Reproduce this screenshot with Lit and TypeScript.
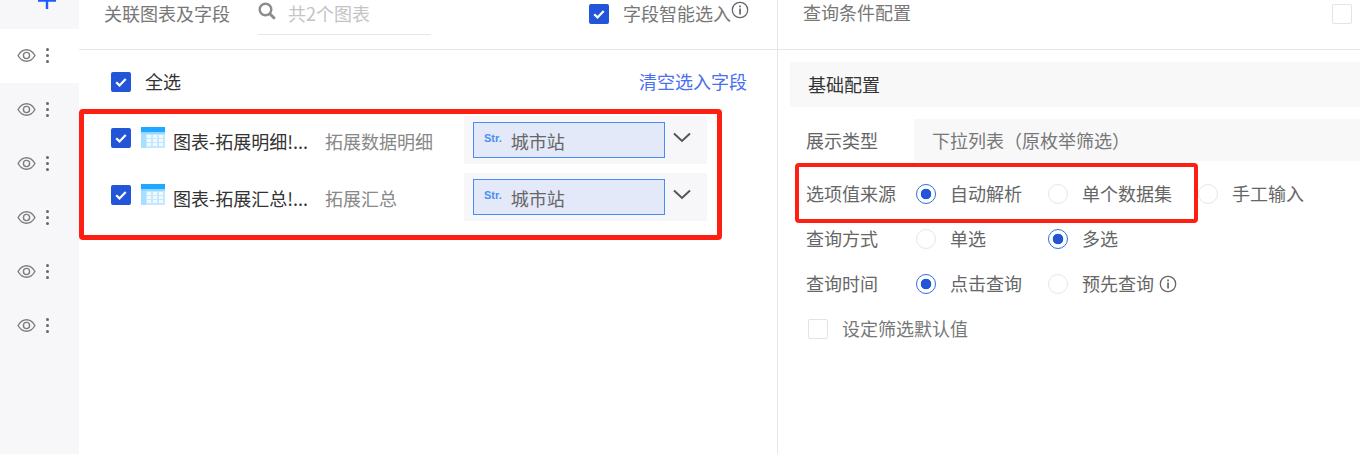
import { css, html, LitElement, svg } from 'lit';
import { customElement } from 'lit/decorators.js';

const check = svg`<svg class="tick" viewBox="0 0 20 20" width="20" height="20"><path d="M5.2 10.2l3.3 3.2 6.2-6.4" fill="none" stroke="#fff" stroke-width="2.2"/></svg>`;

const eye = svg`<svg viewBox="0 0 20 16" width="19" height="15"><path d="M1 8c2.300-4 5.300-6.200 9-6.200S16.700 4 19 8c-2.300 4-5.300 6.200-9 6.200S3.300 12 1 8z" fill="none" stroke="#7d7d7d" stroke-width="1.500"/><circle cx="10" cy="8" r="3.300" fill="none" stroke="#7d7d7d" stroke-width="1.500"/></svg>`;

const info = svg`<svg viewBox="0 0 18 18" width="18" height="18"><circle cx="9" cy="9" r="7.700" fill="none" stroke="#666" stroke-width="1.300"/><rect x="8.200" y="7.500" width="1.700" height="6" fill="#666"/><rect x="8.200" y="4.500" width="1.700" height="1.800" fill="#666"/></svg>`;

const tableIcon = svg`<svg viewBox="0 0 24 21" width="24" height="21"><rect width="24" height="21" fill="#c4e9ff"/><rect y="5" width="5" height="16" fill="#a8deff"/><rect y="5" width="24" height="2" fill="#93d6ff"/><rect width="24" height="5" fill="#1fa8ff"/><g fill="#f1faff"><rect x="6" y="8" width="4" height="3"/><rect x="12" y="8" width="4" height="3"/><rect x="18" y="8" width="4" height="3"/><rect x="6" y="12" width="4" height="3"/><rect x="12" y="12" width="4" height="3"/><rect x="18" y="12" width="4" height="3"/><rect x="6" y="16" width="4" height="3"/><rect x="12" y="16" width="4" height="3"/><rect x="18" y="16" width="4" height="3"/></g></svg>`;

const chartRows = [
  { name: '图表-拓展明细!...', set: '拓展数据明细' },
  { name: '图表-拓展汇总!...', set: '拓展汇总' },
];

const radioRows = [
  { label: '选项值来源', options: [['自动解析', true], ['单个数据集', false], ['手工输入', false]] },
  { label: '查询方式', options: [['单选', false], ['多选', true]] },
  { label: '查询时间', options: [['点击查询', true], ['预先查询', false]], hint: true },
];

@customElement('app-root')
export class App extends LitElement {
  static styles = css`
    :host {
      background: #fff;
      color: #333;
      display: block;
      font-family: 'Noto Sans CJK SC', 'Liberation Sans', sans-serif;
      font-size: 18px;
      height: 454px;
      line-height: 24px;
      overflow: hidden;
      position: relative;
      width: 1360px;
    }

    .page {
      display: flex;
      height: 100%;
    }

    .rail {
      background: #f7f7fa;
      flex: 0 0 79px;
    }

    .rail-top {
      height: 29px;
      overflow: hidden;
    }

    .rail-top svg {
      display: block;
      margin: -1px 0 0 38px;
    }

    .rail-row {
      align-items: center;
      box-sizing: border-box;
      display: flex;
      gap: 10px;
      height: 54px;
      padding: 0 0 2px 17px;
    }

    .rail-row.active {
      background: #fff;
    }

    .dots {
      display: flex;
      flex-direction: column;
      gap: 3px;
    }

    .dots i {
      background: #666;
      border-radius: 50%;
      height: 3px;
      width: 3px;
    }

    .left {
      border-right: 1px solid #e6e6e6;
      flex: 0 0 698px;
    }

    .right {
      flex: 1;
      min-width: 0;
    }

    .head {
      align-items: flex-start;
      border-bottom: 1px solid #e6e6e6;
      box-sizing: border-box;
      color: #777;
      display: flex;
      height: 50px;
      padding-top: 1px;
    }

    .left .head {
      padding-left: 25px;
    }

    .right .head {
      justify-content: space-between;
      padding: 0 8px 0 25px;
    }

    .search {
      align-items: flex-start;
      border-bottom: 1px solid #e6e6e6;
      box-sizing: border-box;
      color: #c4c4c4;
      display: flex;
      gap: 12px;
      height: 34px;
      margin-left: 28px;
      width: 173px;
    }

    .search svg {
      flex: none;
      margin-top: 1px;
    }

    .smart {
      align-items: flex-start;
      display: flex;
      margin-left: auto;
      padding-right: 28px;
    }

    .smart .box {
      margin: 3px 14px 0 0;
    }

    .box {
      border-radius: 2px;
      box-sizing: border-box;
      flex: none;
      height: 20px;
      width: 20px;
    }

    .right .head .box {
      margin-top: 4px;
    }

    .box.on {
      background: #2255d8;
    }

    .box.off {
      background: #fff;
      border: 1px solid #e3e3e3;
    }

    .tick {
      display: block;
    }

    .all {
      align-items: flex-start;
      display: flex;
      gap: 14px;
      line-height: 22px;
      padding: 20px 30px 0 32px;
    }

    .all .box {
      margin-top: 2px;
    }

    .all a {
      color: #4a6ff0;
      margin-left: auto;
    }

    .list {
      display: flex;
      flex-direction: column;
      gap: 9px;
      padding: 24px 0 0 32px;
    }

    .item {
      align-items: flex-start;
      display: flex;
      height: 48px;
    }

    .item .box {
      margin-top: 12px;
    }

    .item .tb {
      line-height: 0;
      margin: 11px 0 0 10px;
    }

    .item .name {
      margin: 13px 0 0 8px;
      white-space: nowrap;
      width: 152px;
    }

    .item .set {
      color: #888;
      margin-top: 13px;
      white-space: nowrap;
      width: 139px;
    }

    .pick {
      align-items: center;
      background: #f7f7fa;
      box-sizing: border-box;
      display: flex;
      height: 48px;
      padding-left: 9px;
      width: 243px;
    }

    .tag {
      align-items: center;
      background: #e3e9f8;
      border: 1px solid #4a8bf5;
      box-sizing: border-box;
      color: #666;
      display: flex;
      height: 36px;
      padding-left: 10px;
      width: 192px;
    }

    .tag b {
      color: #4a8ff5;
      font-family: 'Liberation Sans', sans-serif;
      font-size: 11px;
      line-height: 12px;
      margin: -5px 9px 0 0;
    }

    .tag span {
      padding-top: 2px;
    }

    .pick svg {
      margin: -6px 0 0 8px;
    }

    .section {
      background: #f8f8f9;
      height: 45px;
      line-height: 45px;
      margin: 12px 0 12px 12px;
      padding-left: 18px;
    }

    .field {
      align-items: center;
      color: #666;
      display: flex;
      padding-left: 28px;
    }

    .field .label {
      flex: 0 0 108px;
    }

    .type {
      background: #f8f8f9;
      color: #777;
      flex: 1;
      height: 42px;
      line-height: 43px;
      padding-left: 18px;
    }

    .radios {
      display: flex;
      flex-direction: column;
      gap: 21px;
      margin-top: 21px;
    }

    .radio-row {
      height: 24px;
    }

    .radio-row .label {
      flex: 0 0 110px;
    }

    .radio-row .label,
    .opt .text,
    .default .text {
      line-height: 22px;
      padding-bottom: 2px;
    }

    .opt {
      align-items: center;
      display: flex;
      flex: 0 0 132px;
      gap: 14px;
    }

    .opt.wide {
      flex-basis: 150px;
    }

    .dot {
      background: #fff;
      border: 1px solid #e6e6e6;
      border-radius: 50%;
      box-sizing: border-box;
      flex: none;
      height: 20px;
      position: relative;
      width: 20px;
    }

    .dot.on {
      background: radial-gradient(circle, #2255d8 0 5px, #fff 5.6px);
      border-color: #2f6bea;
    }

    .hint {
      display: block;
      line-height: 0;
      margin-left: -9px;
    }

    .default {
      align-items: center;
      color: #777;
      display: flex;
      gap: 14px;
      margin-top: 21px;
      padding-left: 30px;
    }

    .flag {
      border: 4px solid #ff1f12;
      border-radius: 4px;
      box-sizing: border-box;
      pointer-events: none;
      position: absolute;
    }

    .flag.charts {
      border-width: 5px;
      height: 131px;
      left: 79px;
      top: 109px;
      width: 643px;
    }

    .flag.source {
      height: 60px;
      left: 795px;
      top: 163px;
      width: 403px;
    }
  `;

  renderBox(on: boolean) {
    return html`<span class="box ${on ? 'on' : 'off'}">${on ? check : ''}</span>`;
  }

  render() {
    return html`
      <div class="page">
        <nav class="rail">
          <div class="rail-top">
            <svg viewBox="0 0 18 10" width="18" height="10">
              <path d="M0 1.500h18M9 0v10" fill="none" stroke="#1a5cff" stroke-width="2.400" />
            </svg>
          </div>
          ${[0, 1, 2, 3, 4, 5].map(
            (i) => html`
              <div class="rail-row ${i === 0 ? 'active' : ''}">
                ${eye}
                <span class="dots"><i></i><i></i><i></i></span>
              </div>
            `,
          )}
        </nav>

        <section class="left">
          <header class="head">
            <span>关联图表及字段</span>
            <div class="search">
              <svg viewBox="0 0 18 18" width="18" height="18">
                <circle cx="7.500" cy="7.500" r="5.800" fill="none" stroke="#8c8c8c" stroke-width="2.400" />
                <path d="M11.800 11.800l5 5" stroke="#8c8c8c" stroke-width="2.800" />
              </svg>
              <span>共2个图表</span>
            </div>
            <div class="smart">
              ${this.renderBox(true)}
              <span>字段智能选入</span>
              ${info}
            </div>
          </header>
          <div class="all">
            ${this.renderBox(true)}
            <span>全选</span>
            <a>清空选入字段</a>
          </div>
          <div class="list">
            ${chartRows.map(
              (row) => html`
                <div class="item">
                  ${this.renderBox(true)}
                  <span class="tb">${tableIcon}</span>
                  <span class="name">${row.name}</span>
                  <span class="set">${row.set}</span>
                  <div class="pick">
                    <div class="tag"><b>Str.</b><span>城市站</span></div>
                    <svg viewBox="0 0 18 11" width="18" height="11">
                      <path d="M1 1.500l8 7.500 8-7.500" fill="none" stroke="#555" stroke-width="2" />
                    </svg>
                  </div>
                </div>
              `,
            )}
          </div>
        </section>

        <section class="right">
          <header class="head">
            <span>查询条件配置</span>
            ${this.renderBox(false)}
          </header>
          <div class="section">基础配置</div>
          <div class="field">
            <span class="label">展示类型</span>
            <div class="type">下拉列表（原枚举筛选）</div>
          </div>
          <div class="radios">
            ${radioRows.map(
              (row) => html`
                <div class="field radio-row">
                  <span class="label">${row.label}</span>
                  ${row.options.map(
                    ([text, on], i) => html`
                      <label class="opt ${row.options.length === 3 && i === 1 ? 'wide' : ''}">
                        <span class="dot ${on ? 'on' : ''}"></span>
                        <span class="text">${text}</span>
                        ${row.hint && i === 1 ? html`<span class="hint">${info}</span>` : ''}
                      </label>
                    `,
                  )}
                </div>
              `,
            )}
          </div>
          <div class="default">
            ${this.renderBox(false)}
            <span class="text">设定筛选默认值</span>
          </div>
        </section>
      </div>
      <div class="flag charts"></div>
      <div class="flag source"></div>
    `;
  }
}
